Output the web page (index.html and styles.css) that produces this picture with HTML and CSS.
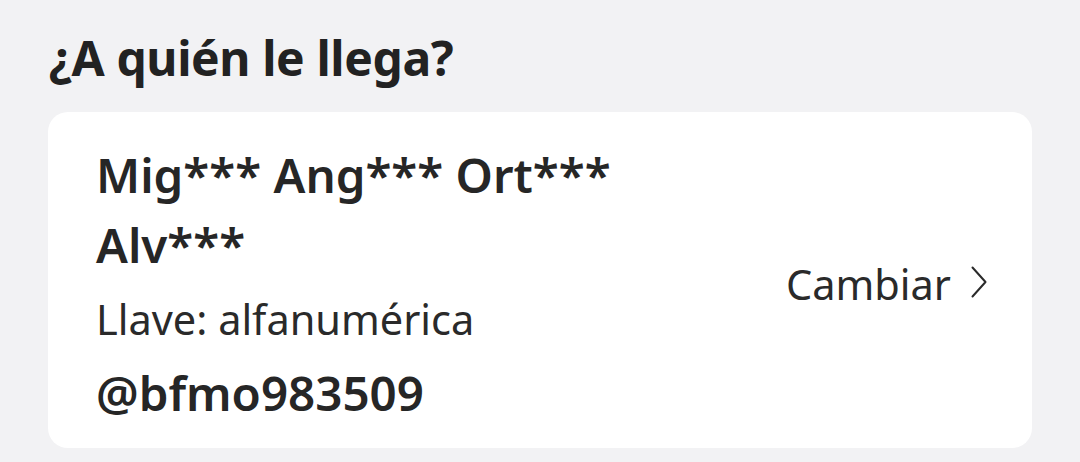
FILE: index.html
```html
<!DOCTYPE html>
<html lang="es">
<head>
<meta charset="utf-8">
<title>¿A quién le llega?</title>
<link rel="stylesheet" href="styles.css">
</head>
<body>
<main class="screen">
  <h2 class="section-title">¿A quién le llega?</h2>
  <section class="recipient-card">
    <div class="recipient-info">
      <p class="recipient-name">Mig*** Ang*** Ort***<br>Alv***</p>
      <p class="key-type">Llave: alfanumérica</p>
      <p class="key-value">@bfmo983509</p>
    </div>
    <button class="change-btn" type="button">
      <span>Cambiar</span>
      <svg class="chevron" viewBox="0 0 16 32" width="16" height="32" aria-hidden="true">
        <path d="M1.5 1.5 L14.5 16 L1.5 30.5" fill="none" stroke="#2a2a2a" stroke-width="2" stroke-linecap="round" stroke-linejoin="round"/>
      </svg>
    </button>
  </section>
</main>
</body>
</html>
```
FILE: styles.css
```css
* { box-sizing: border-box; }

html, body {
  margin: 0;
  padding: 0;
  background: #f2f2f4;
}

body {
  font-family: "Noto Sans", "Open Sans", sans-serif;
  color: #222222;
}

.screen {
  padding: 24px 48px 14px 48px;
  width: 1080px;
  height: 462px;
}

.section-title {
  margin: 0 0 20px 1px;
  font-size: 48px;
  font-weight: 700;
  line-height: 68px;
  letter-spacing: -0.4px;
  color: #222222;
}

.recipient-card {
  background: #ffffff;
  border-radius: 20px;
  height: 336px;
  padding: 28px 45px 20px 48px;
  display: flex;
  align-items: center;
  justify-content: space-between;
}

.recipient-info p {
  margin: 0;
}

.recipient-name {
  font-size: 47.5px;
  font-weight: 600;
  line-height: 70px;
  color: #262626;
}

.key-type {
  font-size: 41.5px;
  font-weight: 400;
  line-height: 78px;
  color: #2a2a2a;
}

.key-value {
  font-size: 47.5px;
  font-weight: 600;
  line-height: 70px;
  color: #262626;
}

.change-btn {
  display: flex;
  align-items: center;
  gap: 20px;
  border: 0;
  background: none;
  padding: 0;
  font-family: inherit;
  font-size: 41.5px;
  color: #2a2a2a;
  cursor: pointer;
}

.chevron {
  display: block;
  margin-top: -4px;
}
```
